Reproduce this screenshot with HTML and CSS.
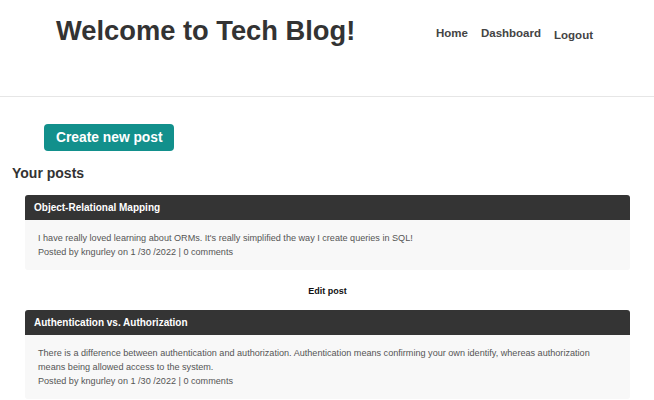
FILE: index.html
```html
<!DOCTYPE html>
<html>
<head>
<meta charset="utf-8">
<link rel="stylesheet" href="styles.css">
</head>
<body>
<header class="site-header">
  <h1 class="site-title">Welcome to Tech Blog!</h1>
  <nav class="nav">
    <a class="nav-link" href="#">Home</a>
    <a class="nav-link" href="#">Dashboard</a>
    <a class="nav-link nav-logout" href="#">Logout</a>
  </nav>
</header>
<main class="main">
  <div class="actions"><button class="btn-create">Create new post</button></div>
  <h2 class="section-title">Your posts</h2>
  <section class="posts">
    <article class="post">
      <div class="post-head">Object-Relational Mapping</div>
      <div class="post-body">
        <p class="post-text">I have really loved learning about ORMs. It's really simplified the way I create queries in SQL!</p>
        <p class="post-meta">Posted by kngurley on 1 /30 /2022 | 0 comments</p>
      </div>
    </article>
    <div class="edit-row"><a class="edit-link" href="#">Edit post</a></div>
    <article class="post">
      <div class="post-head">Authentication vs. Authorization</div>
      <div class="post-body">
        <p class="post-text">There is a difference between authentication and authorization. Authentication means confirming your own identify, whereas authorization means being allowed access to the system.</p>
        <p class="post-meta">Posted by kngurley on 1 /30 /2022 | 0 comments</p>
      </div>
    </article>
  </section>
</main>
</body>
</html>
```
FILE: styles.css
```css
* { box-sizing: border-box; }
body {
  margin: 0;
  font-family: "Liberation Sans", Arial, sans-serif;
  background: #fff;
  color: #333;
}
.site-header {
  height: 97px;
  border-bottom: 1px solid #e6e6e6;
  display: flex;
  align-items: flex-start;
  padding: 0 0 0 56px;
}
.site-title {
  margin: 15px 0 0 0;
  font-size: 27.3px;
  font-weight: bold;
  color: #333;
  width: 380px;
}
.nav {
  display: flex;
  gap: 13px;
  margin-top: 27px;
}
.nav-link {
  font-size: 11.5px;
  font-weight: bold;
  color: #444;
  text-decoration: none;
}
.nav-logout { margin-top: 2px; }
.main { padding: 27px 0 0 0; }
.actions { padding-left: 44px; }
.btn-create {
  background: #12908c;
  color: #fff;
  border: none;
  border-radius: 4px;
  font-family: inherit;
  font-weight: bold;
  font-size: 13.8px;
  padding: 0 12px;
  height: 27px;
  width: 130px;
  white-space: nowrap;
}
.section-title {
  margin: 14px 0 0 12px;
  font-size: 14px;
  font-weight: bold;
  color: #333;
}
.posts { padding: 14px 24px 0 25px; }
.post { background: #f8f8f8; border-radius: 3px; }
.post-head {
  background: #343434;
  color: #fff;
  font-size: 10px;
  font-weight: bold;
  height: 25px;
  line-height: 25px;
  padding-left: 9px;
  border-radius: 3px 3px 0 0;
}
.post-body {
  padding: 11px 36px 11px 13px;
  font-size: 9.1px;
  line-height: 14px;
  color: #555;
}
.post-text, .post-meta { margin: 0; }
.edit-row {
  text-align: center;
  height: 40px;
  padding-top: 10px;
}
.edit-link {
  font-size: 9px;
  font-weight: bold;
  color: #111;
  text-decoration: none;
}
```
